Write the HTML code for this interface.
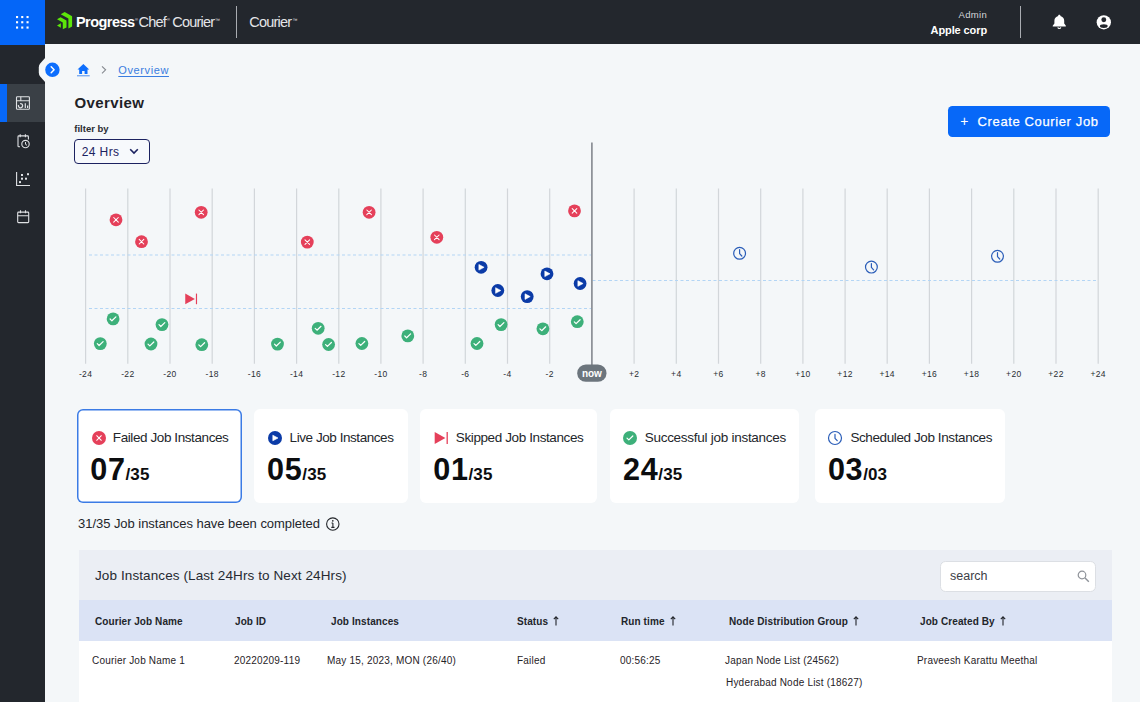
<!DOCTYPE html>
<html lang="en">
<head>
<meta charset="utf-8">
<title>Courier Overview</title>
<style>
*{box-sizing:border-box;margin:0;padding:0}
html,body{width:1140px;height:702px;overflow:hidden}
body{font-family:"Liberation Sans",sans-serif;background:#f4f7f9;color:#1d2026;position:relative}
.abs{position:absolute;white-space:nowrap}
#topbar{position:absolute;left:0;top:0;width:1140px;height:44px;background:#23272d;z-index:2}
#apps{position:absolute;left:0;top:0;width:44.500px;height:44.500px;background:#0466f8}
#sidebar{position:absolute;left:0;top:44px;width:45px;height:658px;background:#23272d}
#active{position:absolute;left:0;top:40px;width:45px;height:38px;background:#3a4046}
#active:before{content:"";position:absolute;left:0;top:0;width:6.500px;height:38px;background:#0768f8}
.card{position:absolute;top:408.900px;height:94.200px;background:#fff;border-radius:6px}
.card .lbl{position:absolute;left:35.500px;top:21.600px;font-size:13.500px;line-height:16px;color:#23262b;white-space:nowrap}
.card .num{position:absolute;left:13px;top:42.400px;font-size:30.600px;line-height:36px;font-weight:bold;color:#0c0d0f;white-space:nowrap;letter-spacing:0.6px}
.card .num small{font-size:17px;letter-spacing:0.100px;margin-left:0}
.card svg{position:absolute;left:12.300px;top:19.700px}
.th{position:absolute;top:615.600px;font-size:10px;line-height:12px;font-weight:bold;color:#22252a;white-space:nowrap;letter-spacing:.1px}
.td{position:absolute;top:655px;font-size:10px;line-height:12px;color:#1f2227;white-space:nowrap;letter-spacing:.2px}
</style>
</head>
<body>
<!-- TOPBAR -->
<div id="topbar">
  <div id="apps">
    <svg class="abs" style="left:15px;top:15px" width="15" height="15" viewBox="0 0 15 15" fill="#fff">
      <g><rect x="1" y="1" width="2.100" height="2.100"/><rect x="6.2" y="1" width="2.100" height="2.100"/><rect x="11.5" y="1" width="2.100" height="2.100"/><rect x="1" y="6.2" width="2.100" height="2.100"/><rect x="6.2" y="6.2" width="2.100" height="2.100"/><rect x="11.5" y="6.2" width="2.100" height="2.100"/><rect x="1" y="11.5" width="2.100" height="2.100"/><rect x="6.2" y="11.5" width="2.100" height="2.100"/><rect x="11.5" y="11.5" width="2.100" height="2.100"/></g>
    </svg>
  </div>
  <!-- progress logo -->
  <svg class="abs" style="left:50px;top:6px" width="30" height="30" viewBox="50 6 30 30" fill="#5ce60a">
    <path d="M60.700 14.300L64.700 12.100L72.100 16.300V26.500L68.400 28.500V18.500Z"/>
    <path d="M57 19.200L60.600 17.200L66.500 20.400V27.400L62.800 29.300V22.500Z"/>
    <path d="M57 25.400L60.900 23.300V27.800Z"/>
  </svg>
  <div class="abs" style="left:76px;top:12px;font-size:14.500px;line-height:20px;color:#fff;font-weight:bold;letter-spacing:-0.55px">Progress</div>
  <div class="abs" style="left:135px;top:17px;font-size:4px;line-height:6px;color:#fff">®</div>
  <div class="abs" style="left:138.500px;top:12px;font-size:14.500px;line-height:20px;color:#e4e5e8;letter-spacing:-0.8px">Chef</div>
  <div class="abs" style="left:167px;top:17px;font-size:4px;line-height:6px;color:#fff">®</div>
  <div class="abs" style="left:172.300px;top:12px;font-size:14.500px;line-height:20px;color:#e4e5e8;letter-spacing:-0.8px">Courier</div>
  <div class="abs" style="left:215px;top:17px;font-size:5px;line-height:6px;color:#e4e5e8">™</div>
  <div class="abs" style="left:236px;top:6px;width:1px;height:32px;background:#a9acb1"></div>
  <div class="abs" style="left:249.300px;top:12px;font-size:14.500px;line-height:20px;color:#e4e5e8;letter-spacing:-0.8px">Courier</div>
  <div class="abs" style="left:292.500px;top:17px;font-size:5px;line-height:6px;color:#e4e5e8">™</div>

  <div class="abs" style="right:153px;top:9px;font-size:9.500px;line-height:11px;color:#d4d6d9;letter-spacing:.3px">Admin</div>
  <div class="abs" style="right:153px;top:23px;font-size:11px;line-height:14px;color:#fff;font-weight:bold;letter-spacing:-.1px">Apple corp</div>
  <div class="abs" style="left:1020px;top:6px;width:1px;height:32px;background:#a9acb1"></div>
  <!-- bell -->
  <svg class="abs" style="left:1048px;top:10px" width="24" height="24" viewBox="1048 10 24 24">
    <path d="M1059.300 14.700c-.7 0-1.100.45-1.100 1v.3c-2.300.6-3.800 2.400-3.800 4.700v2.900l-1.500 1.800c-.5.500-.2 1.200.4 1.200h12c.6 0 .9-.7.400-1.200l-1.500-1.800v-2.900c0-2.300-1.500-4.100-3.800-4.700v-.3c0-.55-.4-1-1.100-1z" fill="#fff"/>
    <path d="M1057.800 27.300a1.550 1.550 0 0 0 3 0" fill="none" stroke="#fff" stroke-width="1.100"/>
  </svg>
  <!-- user -->
  <svg class="abs" style="left:1094px;top:12px" width="20" height="20" viewBox="1094 12 20 20">
    <circle cx="1103.800" cy="22.300" r="7.150" fill="#fff"/>
    <circle cx="1103.800" cy="19.800" r="2.450" fill="#23272d"/>
    <ellipse cx="1103.800" cy="26.100" rx="3.900" ry="1.850" fill="#23272d"/>
  </svg>
</div>

<!-- SIDEBAR -->
<div id="sidebar">
  <div id="active"></div>
</div>
<svg class="abs" style="left:0;top:44px" width="62" height="200" viewBox="0 44 62 200" fill="none" stroke="#dfe1e4" stroke-width="1.100">
  <!-- notch -->
  <path d="M45.500 57.500L40.200 63.500Q38.800 65.200 38.800 67.500V72.500Q38.800 74.800 40.200 76.500L45.500 82.500Z" fill="#f4f7f9" stroke="none"/>
  <!-- dashboard -->
  <rect x="16.500" y="96.700" width="12.900" height="12.600" rx="0.800"/>
  <path d="M16.500 100.800H29.400M20.800 96.700V100.800"/>
  <path d="M18.530 105A2.100 2.100 0 1 0 20.140 103.630" stroke-width="1.300"/>
  <path d="M25.300 103.300V107.900M27.600 105.600V107.900" stroke-width="1.200"/>
  <!-- schedule -->
  <path d="M20 146.700H18.800Q18 146.700 18 145.900V136.700Q18 135.900 18.800 135.900H27.600Q28.400 135.900 28.400 136.700V139.600"/>
  <path d="M20.200 134.300V137.200M25.400 134.300V137.200"/>
  <circle cx="25.500" cy="144.100" r="3.700"/>
  <path d="M25.500 142V144.300L27 145.300" stroke-width="1"/>
  <!-- scatter -->
  <path d="M16.600 172V185.500H30"/>
  <g fill="#dfe1e4" stroke="none"><rect x="21" y="174" width="2" height="2"/><rect x="27" y="173.200" width="2" height="2"/><rect x="21" y="177.700" width="2" height="2"/><rect x="25" y="177.700" width="2" height="2"/><rect x="19" y="181.100" width="2" height="2"/></g>
  <!-- calendar -->
  <rect x="17.700" y="212.100" width="11" height="10.500" rx="0.800"/>
  <path d="M17.700 215.800H28.700M20.500 210.300V213.300M25.500 210.300V213.300"/>
  <!-- collapse button -->
  <circle cx="52.400" cy="69.800" r="7.200" fill="#0d6efd" stroke="none"/>
  <path d="M51.200 66.800l2.900 3-2.900 3" stroke="#fff" stroke-width="1.500" stroke-linecap="round" stroke-linejoin="round"/>
</svg>

<!-- BREADCRUMB -->
<svg class="abs" style="left:76px;top:62px" width="16" height="16" viewBox="76 62 16 16"><path d="M83.350 63.900L77.500 69.600H79.200V74.100H82.100V70.900H84.600V74.100H87.500V69.600H89.200Z" fill="#0d6efd"/><path d="M77 75.800H89.700" stroke="#4d8ff0" stroke-width="1"/></svg>
<svg class="abs" style="left:100px;top:65px" width="8" height="10" viewBox="100 65 8 10"><path d="M102 66.300L105.600 69.800L102 73.300" fill="none" stroke="#85898f" stroke-width="1.100"/></svg>
<div class="abs" style="left:118.300px;top:63px;font-size:11px;line-height:14px;color:#3a7de0;text-decoration:underline;text-underline-offset:1.500px;text-decoration-thickness:1px;letter-spacing:.6px">Overview</div>

<div class="abs" style="left:74.500px;top:93px;font-size:15px;line-height:20px;font-weight:bold;color:#1e2227;letter-spacing:.4px">Overview</div>
<div class="abs" style="left:74.300px;top:122.500px;font-size:9.500px;line-height:12px;font-weight:bold;color:#2a2d32">filter by</div>
<div class="abs" style="left:74px;top:139px;width:76px;height:25px;border:1px solid #1c2260;border-radius:4px;background:#f7f9fc"></div>
<div class="abs" style="left:81.700px;top:144.600px;font-size:12px;line-height:15px;color:#1c2260;letter-spacing:.4px">24 Hrs</div>
<svg class="abs" style="left:129px;top:148px" width="10" height="7" viewBox="0 0 10 7"><path d="M1.200 1.300l3.800 3.800 3.800-3.800" fill="none" stroke="#1c2260" stroke-width="1.600"/></svg>

<!-- button -->
<div class="abs" style="left:948px;top:106px;width:162px;height:30.600px;background:#0768f8;border-radius:4.500px"></div>
<div class="abs" style="left:960.300px;top:113.300px;font-size:14px;line-height:16px;color:#fff">+</div>
<div class="abs" style="left:977.600px;top:113.900px;font-size:13px;line-height:16px;color:#fff;letter-spacing:.62px;-webkit-text-stroke:.25px #fff">Create Courier Job</div>

<!-- CHART -->
<svg id="chart" class="abs" style="left:0;top:0" width="1140" height="400" viewBox="0 0 1140 400">
<path d="M85.6 188.500V363.700M127.8 188.500V363.700M170.0 188.500V363.700M212.2 188.500V363.700M254.4 188.500V363.700M296.6 188.500V363.700M338.8 188.500V363.700M380.9 188.500V363.700M423.1 188.500V363.700M465.3 188.500V363.700M507.5 188.500V363.700M549.7 188.500V363.700M634.1 188.500V363.700M676.3 188.500V363.700M718.5 188.500V363.700M760.7 188.500V363.700M802.9 188.500V363.700M845.1 188.500V363.700M887.2 188.500V363.700M929.4 188.500V363.700M971.6 188.500V363.700M1013.8 188.500V363.700M1056.0 188.500V363.700M1098.2 188.500V363.700" stroke="#d2d6da" stroke-width="1.200" fill="none"/>
<path d="M89 255H591M89 308.500H591M592.500 280.500H1098" stroke="#b3d5f5" stroke-width="1" stroke-dasharray="3 2.500" fill="none"/>
<path d="M591.900 142.500V370" stroke="#83878e" stroke-width="1.600" fill="none"/>
<rect x="577.200" y="364.500" width="29.300" height="17.300" rx="8.600" fill="#6c757d"/>
<text x="591.900" y="376.500" font-family="Liberation Sans, sans-serif" font-size="10" font-weight="bold" fill="#fff" text-anchor="middle">now</text>
<text x="85.6" y="377.400" font-family="Liberation Sans, sans-serif" font-size="8.500" fill="#2a2d33" text-anchor="middle" letter-spacing="0.350">-24</text>
<text x="127.8" y="377.400" font-family="Liberation Sans, sans-serif" font-size="8.500" fill="#2a2d33" text-anchor="middle" letter-spacing="0.350">-22</text>
<text x="170.0" y="377.400" font-family="Liberation Sans, sans-serif" font-size="8.500" fill="#2a2d33" text-anchor="middle" letter-spacing="0.350">-20</text>
<text x="212.2" y="377.400" font-family="Liberation Sans, sans-serif" font-size="8.500" fill="#2a2d33" text-anchor="middle" letter-spacing="0.350">-18</text>
<text x="254.4" y="377.400" font-family="Liberation Sans, sans-serif" font-size="8.500" fill="#2a2d33" text-anchor="middle" letter-spacing="0.350">-16</text>
<text x="296.6" y="377.400" font-family="Liberation Sans, sans-serif" font-size="8.500" fill="#2a2d33" text-anchor="middle" letter-spacing="0.350">-14</text>
<text x="338.8" y="377.400" font-family="Liberation Sans, sans-serif" font-size="8.500" fill="#2a2d33" text-anchor="middle" letter-spacing="0.350">-12</text>
<text x="380.9" y="377.400" font-family="Liberation Sans, sans-serif" font-size="8.500" fill="#2a2d33" text-anchor="middle" letter-spacing="0.350">-10</text>
<text x="423.1" y="377.400" font-family="Liberation Sans, sans-serif" font-size="8.500" fill="#2a2d33" text-anchor="middle" letter-spacing="0.350">-8</text>
<text x="465.3" y="377.400" font-family="Liberation Sans, sans-serif" font-size="8.500" fill="#2a2d33" text-anchor="middle" letter-spacing="0.350">-6</text>
<text x="507.5" y="377.400" font-family="Liberation Sans, sans-serif" font-size="8.500" fill="#2a2d33" text-anchor="middle" letter-spacing="0.350">-4</text>
<text x="549.7" y="377.400" font-family="Liberation Sans, sans-serif" font-size="8.500" fill="#2a2d33" text-anchor="middle" letter-spacing="0.350">-2</text>
<text x="634.1" y="377.400" font-family="Liberation Sans, sans-serif" font-size="8.500" fill="#2a2d33" text-anchor="middle" letter-spacing="0.350">+2</text>
<text x="676.3" y="377.400" font-family="Liberation Sans, sans-serif" font-size="8.500" fill="#2a2d33" text-anchor="middle" letter-spacing="0.350">+4</text>
<text x="718.5" y="377.400" font-family="Liberation Sans, sans-serif" font-size="8.500" fill="#2a2d33" text-anchor="middle" letter-spacing="0.350">+6</text>
<text x="760.7" y="377.400" font-family="Liberation Sans, sans-serif" font-size="8.500" fill="#2a2d33" text-anchor="middle" letter-spacing="0.350">+8</text>
<text x="802.9" y="377.400" font-family="Liberation Sans, sans-serif" font-size="8.500" fill="#2a2d33" text-anchor="middle" letter-spacing="0.350">+10</text>
<text x="845.1" y="377.400" font-family="Liberation Sans, sans-serif" font-size="8.500" fill="#2a2d33" text-anchor="middle" letter-spacing="0.350">+12</text>
<text x="887.2" y="377.400" font-family="Liberation Sans, sans-serif" font-size="8.500" fill="#2a2d33" text-anchor="middle" letter-spacing="0.350">+14</text>
<text x="929.4" y="377.400" font-family="Liberation Sans, sans-serif" font-size="8.500" fill="#2a2d33" text-anchor="middle" letter-spacing="0.350">+16</text>
<text x="971.6" y="377.400" font-family="Liberation Sans, sans-serif" font-size="8.500" fill="#2a2d33" text-anchor="middle" letter-spacing="0.350">+18</text>
<text x="1013.8" y="377.400" font-family="Liberation Sans, sans-serif" font-size="8.500" fill="#2a2d33" text-anchor="middle" letter-spacing="0.350">+20</text>
<text x="1056.0" y="377.400" font-family="Liberation Sans, sans-serif" font-size="8.500" fill="#2a2d33" text-anchor="middle" letter-spacing="0.350">+22</text>
<text x="1098.2" y="377.400" font-family="Liberation Sans, sans-serif" font-size="8.500" fill="#2a2d33" text-anchor="middle" letter-spacing="0.350">+24</text>
<g transform="translate(116.0 219.8)"><circle r="6.4" fill="#e5405a"/><path d="M-2.300 -2.300L2.300 2.300M2.300 -2.300L-2.300 2.300" stroke="#fff" stroke-width="1.050" stroke-linecap="round"/></g>
<g transform="translate(141.5 241.7)"><circle r="6.4" fill="#e5405a"/><path d="M-2.300 -2.300L2.300 2.300M2.300 -2.300L-2.300 2.300" stroke="#fff" stroke-width="1.050" stroke-linecap="round"/></g>
<g transform="translate(201.2 212.3)"><circle r="6.4" fill="#e5405a"/><path d="M-2.300 -2.300L2.300 2.300M2.300 -2.300L-2.300 2.300" stroke="#fff" stroke-width="1.050" stroke-linecap="round"/></g>
<g transform="translate(307.3 242.1)"><circle r="6.4" fill="#e5405a"/><path d="M-2.300 -2.300L2.300 2.300M2.300 -2.300L-2.300 2.300" stroke="#fff" stroke-width="1.050" stroke-linecap="round"/></g>
<g transform="translate(369.1 212.3)"><circle r="6.4" fill="#e5405a"/><path d="M-2.300 -2.300L2.300 2.300M2.300 -2.300L-2.300 2.300" stroke="#fff" stroke-width="1.050" stroke-linecap="round"/></g>
<g transform="translate(436.8 237.3)"><circle r="6.4" fill="#e5405a"/><path d="M-2.300 -2.300L2.300 2.300M2.300 -2.300L-2.300 2.300" stroke="#fff" stroke-width="1.050" stroke-linecap="round"/></g>
<g transform="translate(574.5 210.9)"><circle r="6.4" fill="#e5405a"/><path d="M-2.300 -2.300L2.300 2.300M2.300 -2.300L-2.300 2.300" stroke="#fff" stroke-width="1.050" stroke-linecap="round"/></g>
<g transform="translate(113.1 318.9)"><circle r="6.4" fill="#3db07a"/><path d="M-3 0.100L-1.200 1.900L2.800 -2" fill="none" stroke="#fff" stroke-width="1.200" stroke-linecap="round" stroke-linejoin="round"/></g>
<g transform="translate(100.3 343.6)"><circle r="6.4" fill="#3db07a"/><path d="M-3 0.100L-1.200 1.900L2.800 -2" fill="none" stroke="#fff" stroke-width="1.200" stroke-linecap="round" stroke-linejoin="round"/></g>
<g transform="translate(162.0 324.6)"><circle r="6.4" fill="#3db07a"/><path d="M-3 0.100L-1.200 1.900L2.800 -2" fill="none" stroke="#fff" stroke-width="1.200" stroke-linecap="round" stroke-linejoin="round"/></g>
<g transform="translate(151.0 344.0)"><circle r="6.4" fill="#3db07a"/><path d="M-3 0.100L-1.200 1.900L2.800 -2" fill="none" stroke="#fff" stroke-width="1.200" stroke-linecap="round" stroke-linejoin="round"/></g>
<g transform="translate(201.8 344.7)"><circle r="6.4" fill="#3db07a"/><path d="M-3 0.100L-1.200 1.900L2.800 -2" fill="none" stroke="#fff" stroke-width="1.200" stroke-linecap="round" stroke-linejoin="round"/></g>
<g transform="translate(277.5 344.1)"><circle r="6.4" fill="#3db07a"/><path d="M-3 0.100L-1.200 1.900L2.800 -2" fill="none" stroke="#fff" stroke-width="1.200" stroke-linecap="round" stroke-linejoin="round"/></g>
<g transform="translate(318.2 328.3)"><circle r="6.4" fill="#3db07a"/><path d="M-3 0.100L-1.200 1.900L2.800 -2" fill="none" stroke="#fff" stroke-width="1.200" stroke-linecap="round" stroke-linejoin="round"/></g>
<g transform="translate(328.6 344.5)"><circle r="6.4" fill="#3db07a"/><path d="M-3 0.100L-1.200 1.900L2.800 -2" fill="none" stroke="#fff" stroke-width="1.200" stroke-linecap="round" stroke-linejoin="round"/></g>
<g transform="translate(361.9 343.5)"><circle r="6.4" fill="#3db07a"/><path d="M-3 0.100L-1.200 1.900L2.800 -2" fill="none" stroke="#fff" stroke-width="1.200" stroke-linecap="round" stroke-linejoin="round"/></g>
<g transform="translate(407.8 335.9)"><circle r="6.4" fill="#3db07a"/><path d="M-3 0.100L-1.200 1.900L2.800 -2" fill="none" stroke="#fff" stroke-width="1.200" stroke-linecap="round" stroke-linejoin="round"/></g>
<g transform="translate(477.0 343.5)"><circle r="6.4" fill="#3db07a"/><path d="M-3 0.100L-1.200 1.900L2.800 -2" fill="none" stroke="#fff" stroke-width="1.200" stroke-linecap="round" stroke-linejoin="round"/></g>
<g transform="translate(501.1 324.6)"><circle r="6.4" fill="#3db07a"/><path d="M-3 0.100L-1.200 1.900L2.800 -2" fill="none" stroke="#fff" stroke-width="1.200" stroke-linecap="round" stroke-linejoin="round"/></g>
<g transform="translate(542.9 328.8)"><circle r="6.4" fill="#3db07a"/><path d="M-3 0.100L-1.200 1.900L2.800 -2" fill="none" stroke="#fff" stroke-width="1.200" stroke-linecap="round" stroke-linejoin="round"/></g>
<g transform="translate(577.3 321.7)"><circle r="6.4" fill="#3db07a"/><path d="M-3 0.100L-1.200 1.900L2.800 -2" fill="none" stroke="#fff" stroke-width="1.200" stroke-linecap="round" stroke-linejoin="round"/></g>
<g transform="translate(481.1 267.3)"><circle r="6.4" fill="#0b3ba7"/><path d="M-2.200 -2.800L3 0L-2.200 2.800Z" fill="#fff" stroke="#fff" stroke-width="0.600" stroke-linejoin="round"/></g>
<g transform="translate(497.8 290.5)"><circle r="6.4" fill="#0b3ba7"/><path d="M-2.200 -2.800L3 0L-2.200 2.800Z" fill="#fff" stroke="#fff" stroke-width="0.600" stroke-linejoin="round"/></g>
<g transform="translate(527.2 296.6)"><circle r="6.4" fill="#0b3ba7"/><path d="M-2.200 -2.800L3 0L-2.200 2.800Z" fill="#fff" stroke="#fff" stroke-width="0.600" stroke-linejoin="round"/></g>
<g transform="translate(547.0 273.8)"><circle r="6.4" fill="#0b3ba7"/><path d="M-2.200 -2.800L3 0L-2.200 2.800Z" fill="#fff" stroke="#fff" stroke-width="0.600" stroke-linejoin="round"/></g>
<g transform="translate(580.1 283.5)"><circle r="6.4" fill="#0b3ba7"/><path d="M-2.200 -2.800L3 0L-2.200 2.800Z" fill="#fff" stroke="#fff" stroke-width="0.600" stroke-linejoin="round"/></g>
<g transform="translate(739.6 253.3)"><circle r="5.9" fill="#f4f7f9" stroke="#2a5db8" stroke-width="1.200"/><path d="M0 -3.600V0.300L2.200 2.700" fill="none" stroke="#2a5db8" stroke-width="1.200" stroke-linecap="round" stroke-linejoin="round"/></g>
<g transform="translate(871.4 267.1)"><circle r="5.9" fill="#f4f7f9" stroke="#2a5db8" stroke-width="1.200"/><path d="M0 -3.600V0.300L2.200 2.700" fill="none" stroke="#2a5db8" stroke-width="1.200" stroke-linecap="round" stroke-linejoin="round"/></g>
<g transform="translate(997.5 256.3)"><circle r="5.9" fill="#f4f7f9" stroke="#2a5db8" stroke-width="1.200"/><path d="M0 -3.600V0.300L2.200 2.700" fill="none" stroke="#2a5db8" stroke-width="1.200" stroke-linecap="round" stroke-linejoin="round"/></g>
<g transform="translate(190.9 298.9) scale(0.900)"><path d="M-6.300 -5.900L4.400 0L-6.300 5.900Z" fill="#e5405a"/><path d="M6.200 -5.900V5.900" stroke="#e5405a" stroke-width="1.300"/></g>
</svg>

<!-- CARDS -->
<div id="cards">
<div class="card" style="left:77.3px;width:164.9px;box-shadow:inset 0 0 0 1.500px #3b7be5;border-radius:6px"><svg width="18" height="18" viewBox="-9 -9 18 18"><g transform="translate(0 0)"><circle r="7.0" fill="#e5405a"/><path d="M-2.300 -2.300L2.300 2.300M2.300 -2.300L-2.300 2.300" stroke="#fff" stroke-width="1.050" stroke-linecap="round"/></g></svg><div class="lbl" style="letter-spacing:-0.41px">Failed Job Instances</div><div class="num">07<small>/35</small></div></div>
<div class="card" style="left:254.1px;width:153.7px"><svg width="18" height="18" viewBox="-9 -9 18 18"><g transform="translate(0 0)"><circle r="7.0" fill="#0b3ba7"/><path d="M-2.200 -2.800L3 0L-2.200 2.800Z" fill="#fff" stroke="#fff" stroke-width="0.600" stroke-linejoin="round"/></g></svg><div class="lbl" style="letter-spacing:-0.44px">Live Job Instances</div><div class="num">05<small>/35</small></div></div>
<div class="card" style="left:420.3px;width:176.7px"><svg style="left:11.600px" width="18" height="18" viewBox="-9 -9 18 18"><g transform="translate(0 0)"><path d="M-6.300 -5.900L4.400 0L-6.300 5.900Z" fill="#e5405a"/><path d="M6.200 -5.900V5.900" stroke="#e5405a" stroke-width="1.300"/></g></svg><div class="lbl" style="letter-spacing:-0.39px">Skipped Job Instances</div><div class="num">01<small>/35</small></div></div>
<div class="card" style="left:610.1px;width:188.6px"><svg style="left:11.400px" width="18" height="18" viewBox="-9 -9 18 18"><g transform="translate(0 0)"><circle r="7.0" fill="#3db07a"/><path d="M-3 0.100L-1.200 1.900L2.800 -2" fill="none" stroke="#fff" stroke-width="1.200" stroke-linecap="round" stroke-linejoin="round"/></g></svg><div class="lbl" style="letter-spacing:-0.27px;left:34.600px">Successful job instances</div><div class="num">24<small>/35</small></div></div>
<div class="card" style="left:814.9px;width:190.4px"><svg style="left:11.600px" width="18" height="18" viewBox="-9 -9 18 18"><g transform="translate(0 0)"><circle r="6.5" fill="#fff" stroke="#2a5db8" stroke-width="1.200"/><path d="M0 -3.600V0.300L2.200 2.700" fill="none" stroke="#2a5db8" stroke-width="1.200" stroke-linecap="round" stroke-linejoin="round"/></g></svg><div class="lbl" style="letter-spacing:-0.4px">Scheduled Job Instances</div><div class="num">03<small>/03</small></div></div>
</div><!--/cards-->

<!-- TABLE -->
<div id="table">
<div class="abs" style="left:78px;top:516px;font-size:13px;line-height:16px;color:#23262b;letter-spacing:-.04px">31/35 Job instances have been completed</div>
<svg class="abs" style="left:325px;top:516px" width="16" height="16" viewBox="325 516 16 16"><circle cx="332.800" cy="524.100" r="6.200" fill="none" stroke="#23262b" stroke-width="1.100"/><path d="M332.900 523V527.300M331.500 523H332.900M331.300 527.400H334.500" stroke="#23262b" stroke-width="1.100" fill="none"/><circle cx="332.800" cy="520.800" r=".85" fill="#23262b"/></svg>
<div class="abs" style="left:79px;top:549.500px;width:1033px;height:50.500px;background:#ebeef4"></div>
<div class="abs" style="left:79px;top:600px;width:1033px;height:41px;background:#dbe3f5"></div>
<div class="abs" style="left:79px;top:641px;width:1033px;height:61px;background:#fff"></div>
<div class="abs" style="left:95px;top:568px;font-size:13.500px;line-height:16px;color:#262a31;letter-spacing:.1px">Job Instances (Last 24Hrs to Next 24Hrs)</div>
<div class="abs" style="left:939.800px;top:561px;width:156.700px;height:30.500px;background:#fff;border:1px solid #dcdfe4;border-radius:5.500px"></div>
<div class="abs" style="left:950px;top:568.400px;font-size:12.500px;line-height:16px;color:#3c4046">search</div>
<svg class="abs" style="left:1077px;top:570px" width="13" height="13" viewBox="0 0 13 13"><circle cx="5" cy="5" r="3.800" fill="none" stroke="#8e9299" stroke-width="1.200"/><path d="M7.800 7.800L11.800 11.800" stroke="#8e9299" stroke-width="1.400"/></svg>
<div class="th" style="left:95px">Courier Job Name</div>
<div class="th" style="left:235px">Job ID</div>
<div class="th" style="left:331px">Job Instances</div>
<div class="th" style="left:517px">Status<svg width="6" height="10" viewBox="0 0 6 10" style="vertical-align:-1px;margin-left:5px"><path d="M3 9.500V1M0.800 3.200L3 0.900L5.200 3.200" fill="none" stroke="#22252a" stroke-width="1.100"/></svg></div>
<div class="th" style="left:621px">Run time<svg width="6" height="10" viewBox="0 0 6 10" style="vertical-align:-1px;margin-left:5px"><path d="M3 9.500V1M0.800 3.200L3 0.900L5.200 3.200" fill="none" stroke="#22252a" stroke-width="1.100"/></svg></div>
<div class="th" style="left:729px">Node Distribution Group<svg width="6" height="10" viewBox="0 0 6 10" style="vertical-align:-1px;margin-left:5px"><path d="M3 9.500V1M0.800 3.200L3 0.900L5.200 3.200" fill="none" stroke="#22252a" stroke-width="1.100"/></svg></div>
<div class="th" style="left:920px">Job Created By<svg width="6" height="10" viewBox="0 0 6 10" style="vertical-align:-1px;margin-left:5px"><path d="M3 9.500V1M0.800 3.200L3 0.900L5.200 3.200" fill="none" stroke="#22252a" stroke-width="1.100"/></svg></div>
<div class="td" style="left:92px">Courier Job Name 1</div>
<div class="td" style="left:234px">20220209-119</div>
<div class="td" style="left:327px">May 15, 2023, MON (26/40)</div>
<div class="td" style="left:517px">Failed</div>
<div class="td" style="left:620px">00:56:25</div>
<div class="td" style="left:725px">Japan Node List (24562)</div>
<div class="td" style="left:726px;top:677.200px">Hyderabad Node List (18627)</div>
<div class="td" style="left:917px">Praveesh Karattu Meethal</div>
</div><!--/table-->
</body>
</html>
